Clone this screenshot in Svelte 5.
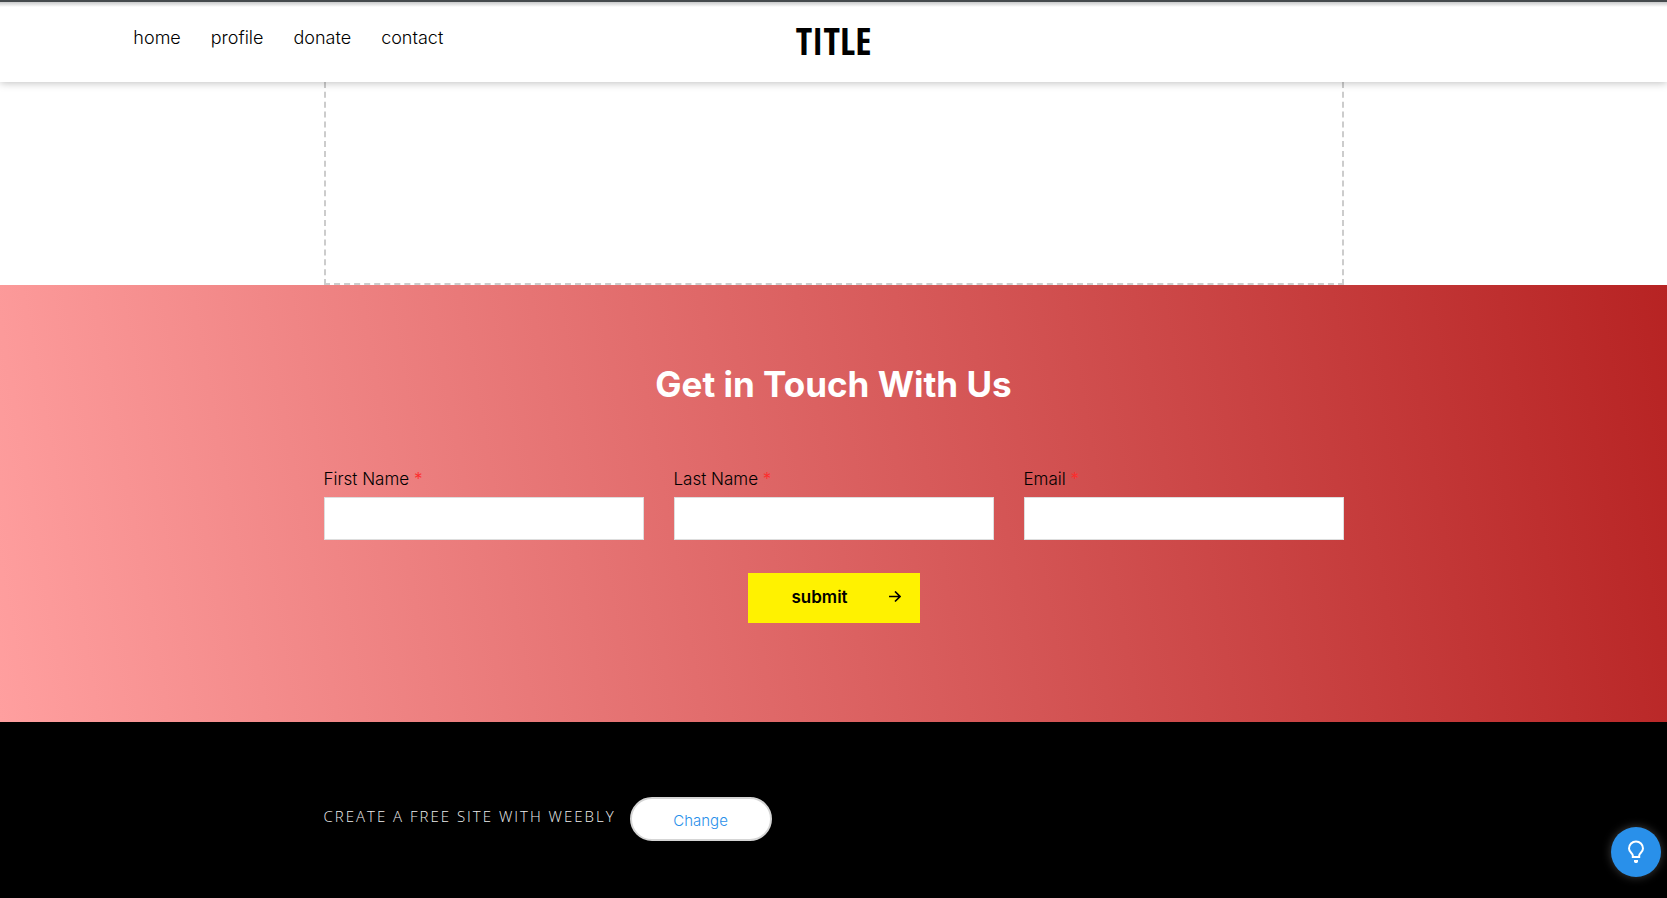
<script>
  const links = ['home', 'profile', 'donate', 'contact'];
  const fields = [
    { id: 'first-name', label: 'First Name', type: 'text' },
    { id: 'last-name', label: 'Last Name', type: 'text' },
    { id: 'email', label: 'Email', type: 'email' }
  ];
</script>

<div class="page">
  <header class="header">
    <nav class="nav">
      {#each links as link}
        <a href="#{link}">{link}</a>
      {/each}
    </nav>
    <a class="brand" href="#top">TITLE</a>
    <span></span>
  </header>

  <main>
    <section class="canvas">
      <div class="wrap drop-area"></div>
    </section>

    <section class="contact">
      <h2>Get in Touch With Us</h2>
      <form class="wrap" onsubmit={(e) => e.preventDefault()}>
        <div class="fields">
          {#each fields as field}
            <div class="field">
              <label for={field.id}>{field.label} <span class="required">*</span></label>
              <input id={field.id} type={field.type} />
            </div>
          {/each}
        </div>
        <button class="submit" type="submit">
          <span>submit</span>
          <svg width="12" height="12" viewBox="0 0 12 12" fill="none" stroke="currentColor" stroke-width="1.7" aria-hidden="true">
            <path d="M0 5.500h11M6 .5l5 5-5 5" />
          </svg>
        </button>
      </form>
    </section>
  </main>

  <footer class="footer">
    <div class="wrap credit">
      <a class="weebly" href="#weebly">CREATE A FREE SITE WITH WEEBLY</a>
      <button class="change" type="button">Change</button>
    </div>
  </footer>

  <button class="help" type="button" aria-label="Help">
    <svg width="18" height="24" viewBox="0 0 18 24" aria-hidden="true">
      <path d="M5.8 17v-1.6C5.8 13.400 2 12.200 2 8.500a7 7 0 0 1 14 0c0 3.700-3.800 4.900-3.800 6.900V17z" fill="none" stroke="#fff" stroke-width="2" />
      <path d="M7 20h4v1.500l-.8 1.500H7.800L7 21.500z" fill="#fff" />
    </svg>
  </button>
</div>

<style>
  :global(body) {
    margin: 0;
    background: #000;
  }
  .page {
    min-height: 100vh;
    display: flex;
    flex-direction: column;
    font-family: Inter, "Open Sans", sans-serif;
    font-weight: 300;
    font-size: 17px;
    line-height: 24px;
    color: #000;
  }
  a {
    color: inherit;
    text-decoration: none;
  }
  .wrap {
    box-sizing: border-box;
    width: 100%;
    max-width: 1020px;
    margin: 0 auto;
  }
  .header {
    position: relative;
    z-index: 1;
    display: grid;
    grid-template-columns: 1fr auto 1fr;
    align-items: center;
    box-sizing: border-box;
    height: 82px;
    padding: 0 8% 4px;
    border-top: 2px solid #454a4d;
    background: linear-gradient(#c8c9ca, #fff 5px);
    box-shadow: 0 1px 8px rgba(0, 0, 0, 0.25);
  }
  .nav {
    display: flex;
    gap: 30px;
    padding-bottom: 4px;
    font-size: 18px;
  }
  .brand {
    font-family: "Open Sans Condensed", "Roboto Condensed", Roboto, sans-serif;
    font-weight: 500;
    font-size: 38px;
    line-height: 40px;
  }
  .canvas {
    background: #fff;
    padding: 0 20px;
  }
  .drop-area {
    height: 203px;
    border: 2px dashed #ccc;
    border-top: 0;
  }
  .contact {
    padding: 79px 20px 99px;
    background: linear-gradient(80deg, #ff9f9f, #b72323);
  }
  h2 {
    margin: 0 0 63px;
    font-size: 35px;
    font-weight: 700;
    line-height: 40px;
    text-align: center;
    color: #fff;
  }
  form {
    display: flex;
    flex-direction: column;
    align-items: center;
    gap: 33px;
  }
  .fields {
    display: grid;
    grid-template-columns: repeat(3, 1fr);
    gap: 30px;
    width: 100%;
  }
  .field {
    display: flex;
    flex-direction: column;
    gap: 6px;
  }
  .required {
    color: #ff2b2b;
  }
  input {
    box-sizing: border-box;
    width: 100%;
    height: 43px;
    padding: 0 12px;
    border: 1px solid #ddd;
    background: #fff;
    font: inherit;
  }
  .submit {
    display: flex;
    align-items: center;
    justify-content: space-between;
    width: 172px;
    height: 50px;
    padding: 0 19px 2px 44px;
    border: 0;
    background: #fff200;
    color: #000;
    font: inherit;
    font-weight: 600;
  }
  .footer {
    flex: 1;
    padding: 75px 20px;
    background: #000;
  }
  .credit {
    display: flex;
    align-items: center;
    gap: 14px;
  }
  .weebly {
    padding-bottom: 6px;
    font-family: "Open Sans", sans-serif;
    font-size: 15px;
    letter-spacing: 2px;
    color: #eee;
  }
  .change {
    width: 142px;
    height: 44px;
    padding: 4px 0 0;
    border: 2px solid #d5d5d5;
    border-radius: 22px;
    background: #fff;
    color: #2990ea;
    font: inherit;
    font-size: 15px;
  }
  .help {
    position: fixed;
    right: 6px;
    bottom: 21px;
    display: grid;
    place-items: center;
    width: 50px;
    height: 50px;
    padding: 0;
    border: 0;
    border-radius: 50%;
    background: #2990ea;
    box-shadow: 0 0 10px rgba(255, 255, 255, 0.25);
  }
</style>
